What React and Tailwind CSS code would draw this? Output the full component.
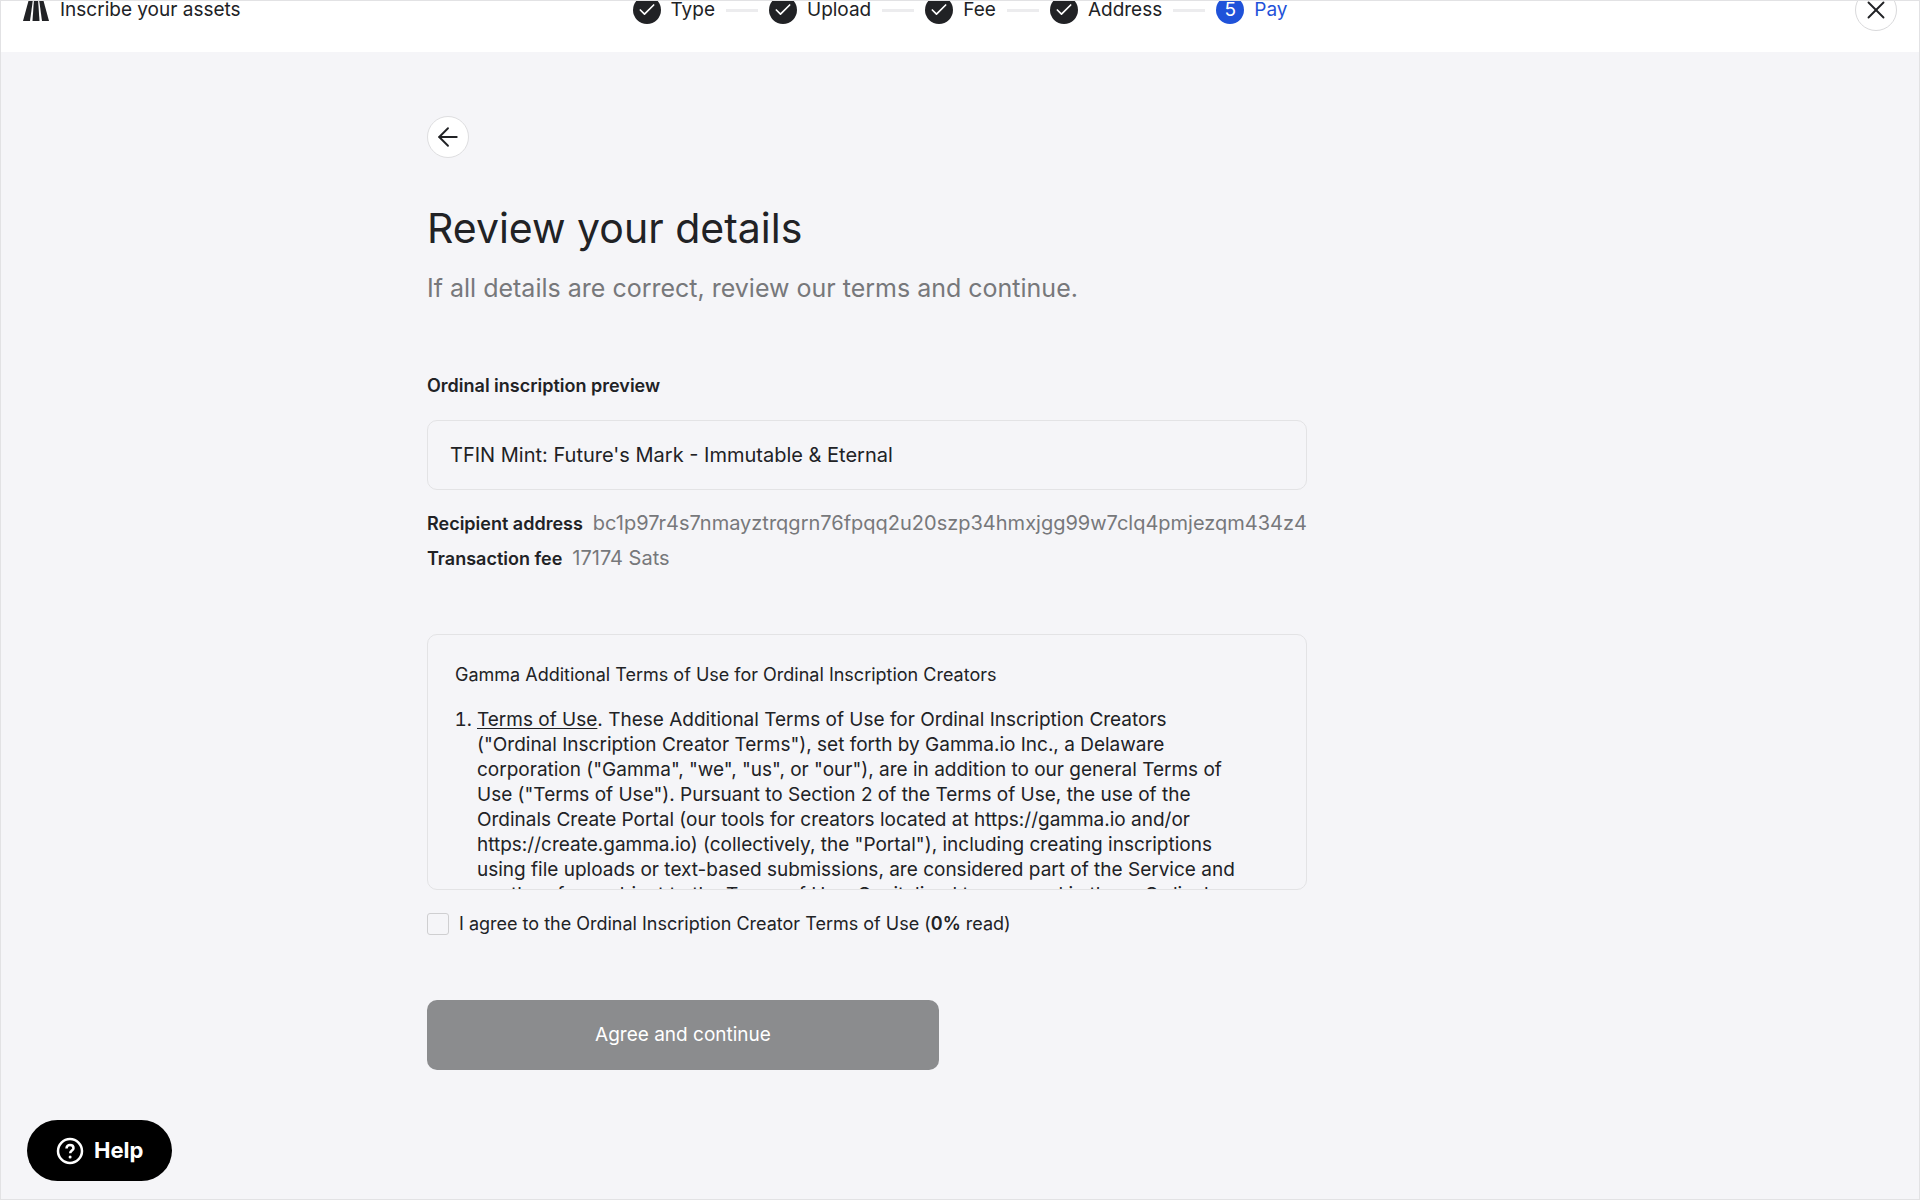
import { Fragment, useState } from 'react';
import { ArrowLeft, Check, X } from 'lucide-react';
import clsx from 'clsx';

const steps = ['Type', 'Upload', 'Fee', 'Address', 'Pay'];
const currentStep = 4;

function Logo() {
  return (
    <svg viewBox="0 0 26 22" className="h-[22px] w-[26px]" fill="currentColor" aria-hidden="true">
      <path d="M6 0h4L7 22H0z" />
      <path d="M11 0h4l1.500 22h-7z" />
      <path d="M16 0h4l6 22h-7z" />
    </svg>
  );
}

function Header() {
  return (
    <header className="overflow-hidden bg-white">
      <div className="-mt-[33px] grid h-[84px] grid-cols-[1fr_auto_1fr] items-center px-[22px] text-[19px]">
        <div className="flex items-center gap-[11px]">
          <Logo />
          <span>Inscribe your assets</span>
        </div>

        <ol className="flex items-center gap-[11px]">
          {steps.map((step, i) => (
            <Fragment key={step}>
              {i > 0 && <li aria-hidden="true" className="h-[3px] w-8 bg-[#ececee]" />}
              <li className={clsx('flex items-center gap-[10px]', i === currentStep && 'text-[#1f52d9]')}>
                <span
                  className={clsx(
                    'flex h-7 w-7 items-center justify-center rounded-full text-white',
                    i === currentStep ? 'bg-[#1f52d9]' : 'bg-[#212225]'
                  )}
                >
                  {i < currentStep ? <Check size={20} /> : i + 1}
                </span>
                {step}
              </li>
            </Fragment>
          ))}
        </ol>

        <button
          aria-label="Close"
          className="flex h-[42px] w-[42px] items-center justify-center justify-self-end rounded-full border border-[#d9d9db]"
        >
          <X size={30} strokeWidth={1.5} />
        </button>
      </div>
    </header>
  );
}

function Terms() {
  return (
    <section className="h-64 overflow-y-auto rounded-[10px] border border-[#e3e3e5] px-[27px] pt-7 [scrollbar-width:none]">
      <h2 className="text-[18px] leading-6">Gamma Additional Terms of Use for Ordinal Inscription Creators</h2>
      <ol className="mt-5 list-decimal pr-9 pl-[22px] text-[19px] leading-[25px]">
        <li>
          <a href="#terms" className="underline underline-offset-2">Terms of Use</a>. These Additional Terms of Use for
          Ordinal Inscription Creators ("Ordinal Inscription Creator Terms"), set forth by Gamma.io Inc., a Delaware
          corporation ("Gamma", "we", "us", or "our"), are in addition to our general Terms of Use ("Terms of Use").
          Pursuant to Section 2 of the Terms of Use, the use of the Ordinals Create Portal (our tools for creators
          located at https://gamma.io and/or https://create.gamma.io) (collectively, the "Portal"), including creating
          inscriptions using file uploads or text-based submissions, are considered part of the Service and are
          therefore subject to the Terms of Use. Capitalized terms used in these Ordinal
        </li>
      </ol>
    </section>
  );
}

export default function App() {
  const [agreed, setAgreed] = useState(false);

  return (
    <div className="min-h-screen border border-[#e2e2e4] bg-[#f5f5f8] font-['Inter',sans-serif] text-[#212225]">
      <Header />

      <main className="mx-auto max-w-[1066px] pt-16 pb-28">
        <button
          aria-label="Back"
          className="flex h-[42px] w-[42px] items-center justify-center rounded-full border border-[#dedee0] bg-white"
        >
          <ArrowLeft size={30} strokeWidth={1.5} />
        </button>

        <h1 className="mt-11 text-[41px] leading-[52px]">Review your details</h1>
        <p className="mt-[18px] text-[25px] leading-8 text-[#77787b]">
          If all details are correct, review our terms and continue.
        </p>

        <div className="mt-[70px] max-w-[880px]">
          <h2 className="text-[18px] leading-6 font-semibold">Ordinal inscription preview</h2>
          <div className="mt-[22px] rounded-[10px] border border-[#e3e3e5] px-[22px] py-[22px] text-[20px] leading-6">
            TFIN Mint: Future's Mark - Immutable &amp; Eternal
          </div>

          <dl className="mt-4 leading-[35px]">
            <div className="flex items-baseline gap-[10px]">
              <dt className="text-[18px] font-semibold">Recipient address</dt>
              <dd className="text-[20px] whitespace-nowrap text-[#77787b]">
                bc1p97r4s7nmayztrqgrn76fpqq2u20szp34hmxjgg99w7clq4pmjezqm434z4
              </dd>
            </div>
            <div className="flex items-baseline gap-[10px]">
              <dt className="text-[18px] font-semibold">Transaction fee</dt>
              <dd className="text-[20px] text-[#77787b]">17174 Sats</dd>
            </div>
          </dl>

          <div className="mt-[58px]">
            <Terms />
          </div>

          <label className="mt-[22px] flex items-center gap-[10px] text-[18px] leading-6">
            <input
              type="checkbox"
              checked={agreed}
              onChange={(e) => setAgreed(e.target.checked)}
              className="h-[22px] w-[22px] appearance-none rounded-[3px] border border-[#cfcfd1] checked:bg-[#212225]"
            />
            <span>
              I agree to the Ordinal Inscription Creator Terms of Use (<b className="font-semibold">0%</b> read)
            </span>
          </label>

          <button
            disabled={!agreed}
            className="mt-16 h-[70px] w-full max-w-[512px] rounded-[10px] bg-[#212225] text-[19px] text-white disabled:bg-[#8b8c8e]"
          >
            Agree and continue
          </button>
        </div>
      </main>

      {/* Help launcher */}
      <button className="fixed bottom-[19px] left-[27px] flex h-[61px] items-center gap-[10px] rounded-full bg-black px-[29px] text-[22px] font-bold text-white">
        <svg viewBox="0 0 28 28" className="h-7 w-7" fill="none" stroke="currentColor" strokeWidth="2.5" aria-hidden="true">
          <circle cx="14" cy="14" r="12" />
          <path d="M10.5 11.5c0-2 1.500-3.500 3.500-3.500s3.500 1.300 3.500 3.200c0 2.300-3.300 2.500-3.300 5" />
          <circle cx="14.100" cy="20" r="1.500" fill="currentColor" stroke="none" />
        </svg>
        Help
      </button>
    </div>
  );
}
